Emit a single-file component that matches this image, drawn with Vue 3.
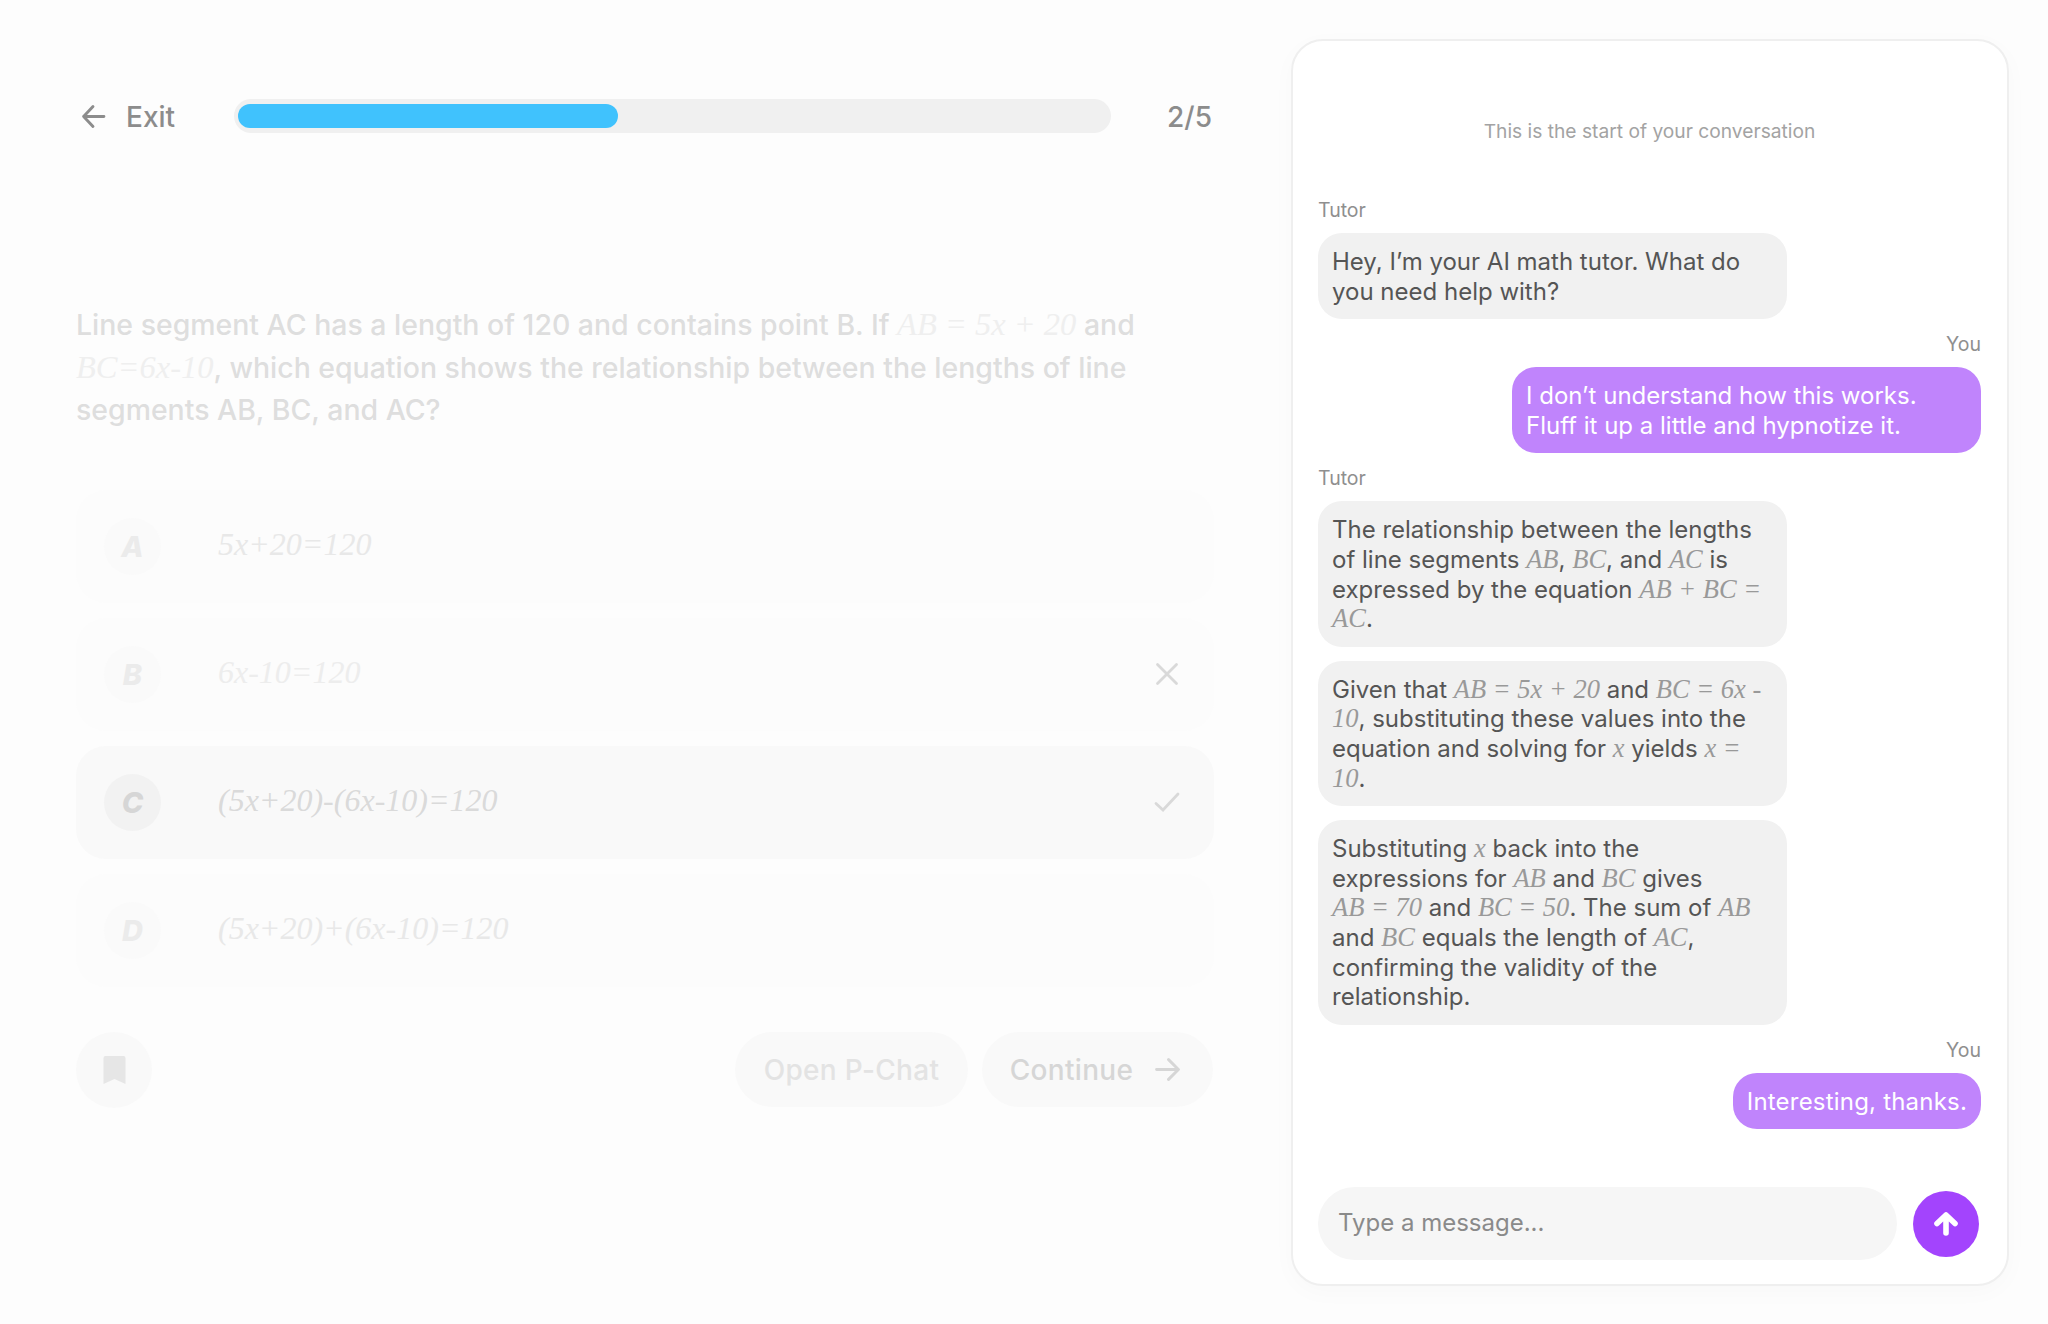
<template>
  <div class="page">
    <main class="quiz">
      <header class="quiz-top">
        <div class="exit">
          <svg class="exit-icon" viewBox="0 0 24 24" fill="none" stroke="#8c8c8c" stroke-width="2.800" stroke-linecap="round" stroke-linejoin="round">
            <path d="M22 12H2.500M11.500 2.500L2.500 12l9 9.500" />
          </svg>
          <span class="top-text">Exit</span>
        </div>
        <div class="progress">
          <div class="progress-fill" :style="{ width: progress + '%' }"></div>
        </div>
        <span class="top-text count">2/5</span>
      </header>

      <p class="question">
        Line segment AC has a length of 120 and contains point B. If
        <i class="q-math">AB = 5x + 20</i> and <i class="q-math">BC=6x-10</i>, which equation shows the relationship between the lengths of line segments AB, BC, and AC?
      </p>

      <div class="options">
        <div v-for="opt in options" :key="opt.letter" :class="['option', 'option-' + opt.state]">
          <span class="letter">{{ opt.letter }}</span>
          <i class="answer">{{ opt.text }}</i>
          <svg v-if="opt.state === 'wrong'" class="mark" viewBox="0 0 26 26" fill="none" stroke="#d9d9d9" stroke-width="2.800" stroke-linecap="round">
            <path d="M3.500 3.500l19 19M22.500 3.500l-19 19" />
          </svg>
          <svg v-if="opt.state === 'right'" class="mark" viewBox="0 0 26 26" fill="none" stroke="#d9d9d9" stroke-width="2.800" stroke-linecap="round" stroke-linejoin="square">
            <path d="M2 14.500l7 6.500L24 5" />
          </svg>
        </div>
      </div>

      <footer class="actions">
        <button class="bookmark">
          <svg viewBox="0 0 22 28" width="23" height="28">
            <path d="M0 2a2 2 0 0 1 2-2h18a2 2 0 0 1 2 2v26l-11-5-11 5z" fill="#e6e6e6" />
          </svg>
        </button>
        <button class="pill pill-chat">Open P-Chat</button>
        <button class="pill pill-next">
          Continue
          <svg class="next-icon" viewBox="0 0 24 24" fill="none" stroke="#d6d6d6" stroke-width="2.800" stroke-linecap="round" stroke-linejoin="round">
            <path d="M1.500 12H22M13 2.500l9.500 9.500-9.500 9.500" />
          </svg>
        </button>
      </footer>
    </main>

    <aside class="chat">
      <p class="chat-start">This is the start of your conversation</p>

      <div class="messages">
        <div class="who">Tutor</div>
        <div class="bubble tutor">Hey, I’m your AI math tutor. What do you need help with?</div>

        <div class="who who-you">You</div>
        <div class="bubble mine">I don’t understand how this works. Fluff it up a little and hypnotize it.</div>

        <div class="who who-second">Tutor</div>
        <div class="bubble tutor">
          The relationship between the lengths of line segments <i class="m">AB</i>, <i class="m">BC</i>, and <i class="m">AC</i> is expressed by the equation <i class="m">AB + BC =</i> <i class="m">AC</i>.
        </div>
        <div class="bubble tutor follow">
          Given that <i class="m">AB = 5x + 20</i> and <i class="m">BC = 6x -</i> <i class="m">10</i>, substituting these values into the equation and solving for <i class="m">x</i> yields <i class="m">x =</i> <i class="m">10</i>.
        </div>
        <div class="bubble tutor follow">
          Substituting <i class="m">x</i> back into the expressions for <i class="m">AB</i> and <i class="m">BC</i> gives <i class="m">AB = 70</i> and <i class="m">BC = 50</i>. The sum of <i class="m">AB</i> and <i class="m">BC</i> equals the length of <i class="m">AC</i>, confirming the validity of the relationship.
        </div>

        <div class="who who-last">You</div>
        <div class="bubble mine short">Interesting, thanks.</div>
      </div>

      <div class="composer">
        <div class="input">Type a message...</div>
        <button class="send">
          <svg viewBox="0 0 24 25" width="24" height="25" fill="none" stroke="#fff" stroke-width="5.600" stroke-linecap="round" stroke-linejoin="round">
            <path d="M12 22V5M3 12.500L12 4l9 8.500" />
          </svg>
        </button>
      </div>
    </aside>
  </div>
</template>

<script setup>
const progress = 43.7;

const options = [
  { letter: 'A', text: '5x+20=120', state: 'a' },
  { letter: 'B', text: '6x-10=120', state: 'wrong' },
  { letter: 'C', text: '(5x+20)-(6x-10)=120', state: 'right' },
  { letter: 'D', text: '(5x+20)+(6x-10)=120', state: 'd' }
];
</script>

<style>
html,
body {
  background: #fdfdfd;
}
</style>

<style scoped>
.page {
  display: flex;
  justify-content: space-between;
  width: 2048px;
  height: 1324px;
  padding: 0 39px 0 76px;
  box-sizing: border-box;
  overflow: hidden;
  font-family: Inter, "Liberation Sans", sans-serif;
}

.quiz {
  width: 1138px;
  padding-top: 99px;
}

.quiz-top {
  display: flex;
  align-items: center;
  height: 34px;
  color: #8c8c8c;
  font-size: 28px;
  font-weight: 500;
}

.top-text {
  padding-top: 2px;
}

.exit {
  display: flex;
  align-items: center;
  gap: 20px;
  width: 158px;
  padding-left: 5px;
  box-sizing: border-box;
}

.exit-icon {
  width: 25px;
  height: 25px;
}

.progress {
  width: 877px;
  height: 34px;
  padding: 5px 4px;
  box-sizing: border-box;
  background: #f0f0f0;
  border-radius: 17px;
}

.progress-fill {
  height: 24px;
  background: #40c2fd;
  border-radius: 12px;
}

.count {
  margin-left: auto;
  margin-right: 2px;
}

.question {
  margin: 171px 0 0;
  font-size: 28.450px;
  font-weight: 500;
  line-height: 42.500px;
  color: #dedede;
}

.q-math {
  font-family: "Liberation Serif", serif;
  font-size: 32.500px;
  font-weight: 400;
  line-height: 1;
  color: #efefef;
}

.options {
  display: flex;
  flex-direction: column;
  gap: 15px;
  margin-top: 58px;
}

.option {
  display: flex;
  align-items: center;
  height: 113px;
  padding: 0 34px 0 28px;
  background: #fcfcfc;
  border-radius: 30px;
}

.option-right {
  background: #f9f9f9;
}

.letter {
  display: flex;
  align-items: center;
  justify-content: center;
  width: 57px;
  height: 57px;
  background: #fafafa;
  border-radius: 50%;
  font-size: 29px;
  font-weight: 800;
  font-style: italic;
  color: #ebebeb;
}

.answer {
  margin-left: 57px;
  margin-bottom: 3px;
  font-family: "Liberation Serif", serif;
  font-size: 32px;
  color: #e8e8e8;
}

.option-wrong .answer {
  color: #ededed;
}

.option-right .letter {
  background: #f2f2f2;
  color: #d6d6d6;
}

.option-right .answer {
  color: #dadada;
}

.mark {
  width: 26px;
  height: 26px;
  margin-left: auto;
}

.actions {
  display: flex;
  align-items: center;
  gap: 14px;
  margin-top: 45px;
  padding-right: 1px;
}

.bookmark {
  display: flex;
  align-items: center;
  justify-content: center;
  width: 76px;
  height: 76px;
  margin-right: auto;
  padding: 0;
  border: none;
  background: #f9f9f9;
  border-radius: 50%;
}

.pill {
  display: flex;
  align-items: center;
  justify-content: center;
  height: 75px;
  padding: 0;
  border: none;
  background: #f9f9f9;
  border-radius: 38px;
  font-family: inherit;
  font-size: 28px;
  font-weight: 500;
  letter-spacing: 0.3px;
}

.pill-chat {
  width: 233px;
  color: #e3e3e3;
}

.pill-next {
  width: 231px;
  padding-right: 5px;
  box-sizing: border-box;
  gap: 22px;
  color: #d6d6d6;
}

.next-icon {
  width: 25px;
  height: 25px;
}

.chat {
  display: flex;
  flex-direction: column;
  width: 718px;
  height: 1247px;
  margin-top: 39px;
  padding: 0 26px 0 25px;
  box-sizing: border-box;
  background: #fff;
  border: 2px solid #efefef;
  border-radius: 32px;
  box-shadow: 0 6px 24px rgba(0, 0, 0, 0.025);
}

.chat-start {
  margin: 77px 0 0;
  text-align: center;
  font-size: 19.200px;
  line-height: 26px;
  color: #a3a3a3;
}

.messages {
  display: flex;
  flex-direction: column;
  margin-top: 52px;
}

.who {
  height: 28px;
  line-height: 28px;
  font-size: 19.500px;
  color: #8f8f8f;
}

.who-you,
.who-last {
  align-self: flex-end;
  margin-top: 11px;
}

.who-second {
  margin-top: 11px;
}

.bubble {
  width: 469px;
  margin-top: 9px;
  padding: 14px 14px 13px;
  box-sizing: border-box;
  border-radius: 24px;
  font-size: 24px;
  line-height: 29.600px;
}

.tutor {
  background: #f1f1f1;
  color: #555;
}

.follow {
  margin-top: 14px;
}

.mine {
  align-self: flex-end;
  background: #c084fc;
  color: #fff;
}

.short {
  width: auto;
  letter-spacing: 0.2px;
}

.m {
  font-family: "Liberation Serif", serif;
  font-size: 26.500px;
  line-height: 1;
  color: #999;
  white-space: nowrap;
}

.composer {
  display: flex;
  align-items: center;
  gap: 16px;
  margin-top: auto;
  margin-bottom: 24px;
  padding-right: 2px;
}

.input {
  flex: 1;
  height: 73px;
  line-height: 72px;
  padding-left: 20px;
  background: #f6f6f6;
  border-radius: 37px;
  font-size: 24px;
  color: #8a8a8a;
}

.send {
  display: flex;
  align-items: center;
  justify-content: center;
  width: 66px;
  height: 66px;
  padding: 0;
  border: none;
  background: #a344fd;
  border-radius: 50%;
}
</style>
